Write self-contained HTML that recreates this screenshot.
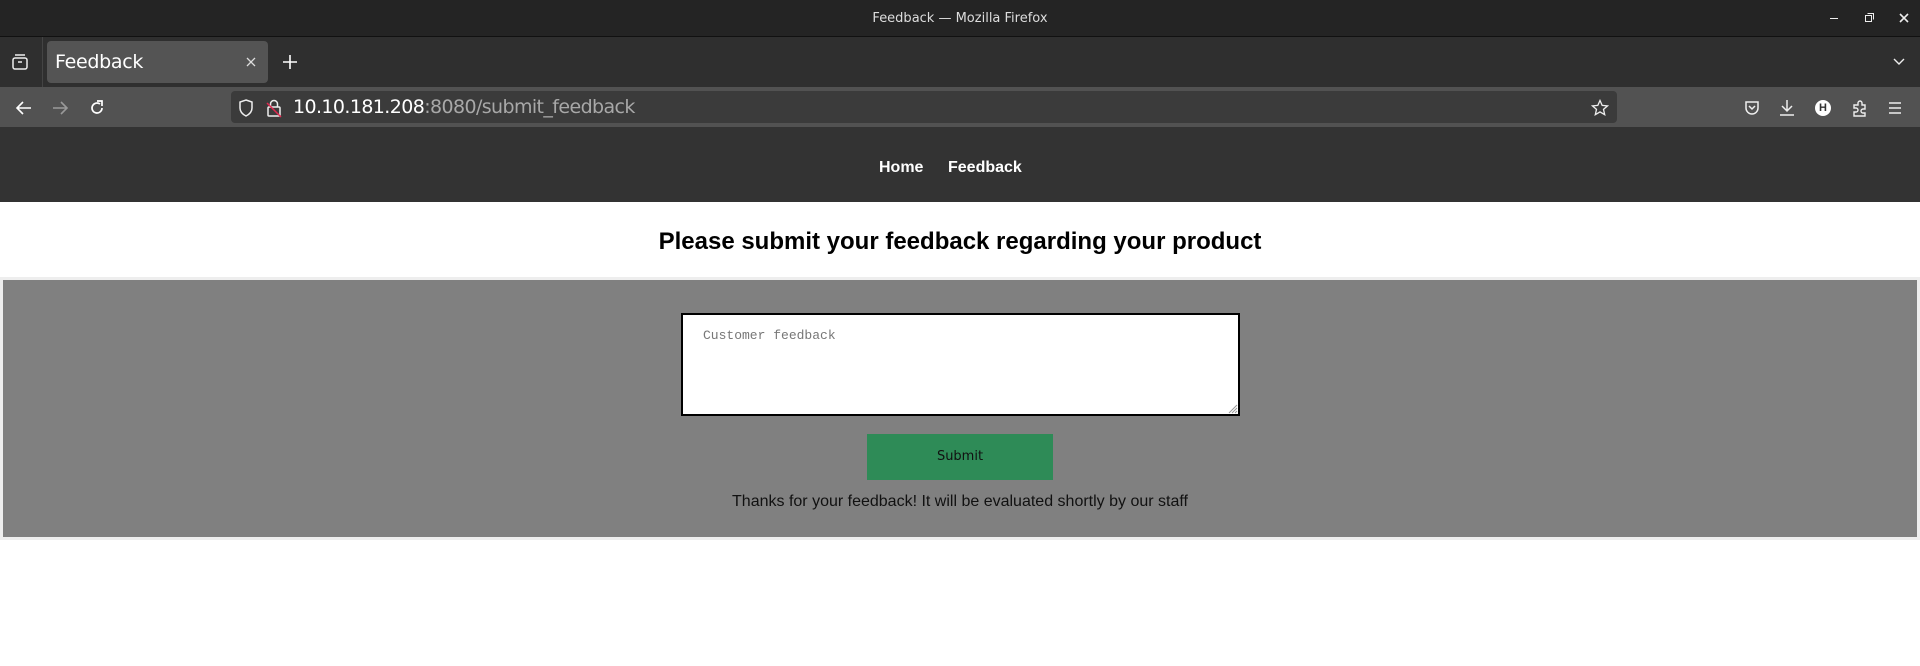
<!DOCTYPE html>
<html><head><meta charset="utf-8"><style>
*{margin:0;padding:0;box-sizing:border-box}
body{width:1920px;height:666px;background:#fff;font-family:"Liberation Sans",Arial,sans-serif;position:relative;overflow:hidden}
.abs{position:absolute}
#title{top:0;left:0;width:1920px;height:37px;background:#242424;border-bottom:1px solid #111}
#tabs{top:37px;left:0;width:1920px;height:50px;background:#2f2f2f}
#tool{top:87px;left:0;width:1920px;height:40px;background:#525252}
#nav{top:127px;left:0;width:1920px;height:75px;background:#333}
svg{position:absolute}
</style></head><body>
<div id="title" class="abs"><div class="abs" style="left:0;width:1920px;top:11px;text-align:center;color:#ddd;font-size:13px;font-family:'DejaVu Sans',sans-serif">Feedback — Mozilla Firefox</div>
<div class="abs" style="left:1830px;top:18px;width:8px;height:1px;background:#eee"></div>
<svg style="left:1864px;top:13px" width="10" height="10"><rect x="1.5" y="2.5" width="6" height="6" fill="none" stroke="#eee"/><path d="M3.5 0.5H9.5V6.5" fill="none" stroke="#eee"/></svg>
<svg style="left:1899px;top:13px" width="10" height="10"><path d="M1 1L9 9M9 1L1 9" stroke="#eee" stroke-width="1.6"/></svg>
</div>
<div id="tabs" class="abs">
<svg style="left:11px;top:16px" width="18" height="18"><rect x="2" y="5" width="14" height="11" rx="2" fill="none" stroke="#eee" stroke-width="1.5"/><path d="M4 2H14M7 9H11" stroke="#eee" stroke-width="1.5"/></svg>
<div class="abs" style="left:42px;top:0;width:1px;height:50px;background:#444"></div>
<div class="abs" style="left:47px;top:4px;width:221px;height:42px;background:#545454;border-radius:4px"></div>
<div class="abs" style="left:55px;top:14px;color:#fff;font-size:19px;font-family:'DejaVu Sans',sans-serif;letter-spacing:-0.3px">Feedback</div>
<svg style="left:246px;top:20px" width="10" height="10"><path d="M1 1L9 9M9 1L1 9" stroke="#ddd" stroke-width="1.3"/></svg>
<svg style="left:283px;top:18px" width="14" height="14"><path d="M7 0V14M0 7H14" stroke="#fff" stroke-width="1.6"/></svg>
<svg style="left:1893px;top:21px" width="12" height="8"><path d="M1 1L6 6L11 1" fill="none" stroke="#eee" stroke-width="1.4"/></svg>
</div>
<div id="tool" class="abs">
<svg style="left:15px;top:13px" width="18" height="16"><path d="M16 8H2M8 2L2 8L8 14" fill="none" stroke="#fff" stroke-width="1.6"/></svg>
<svg style="left:51px;top:13px" width="18" height="16"><path d="M2 8H16M10 2L16 8L10 14" fill="none" stroke="#999" stroke-width="1.6"/></svg>
<svg style="left:88px;top:12px" width="18" height="18"><path d="M14 9A5 5 0 1 1 12 5" fill="none" stroke="#fff" stroke-width="1.7"/><path d="M9 2H14V7" fill="none" stroke="#fff" stroke-width="1.7"/></svg>
<div class="abs" style="left:231px;top:4px;width:1386px;height:32px;background:#3b3b3b;border-radius:4px"></div>
<svg style="left:238px;top:12px" width="16" height="18"><path d="M8 1L14 3V9C14 13 11 15.5 8 17C5 15.5 2 13 2 9V3Z" fill="none" stroke="#eee" stroke-width="1.5"/></svg>
<svg style="left:266px;top:11px" width="16" height="20"><rect x="2" y="9" width="12" height="9" rx="1" fill="none" stroke="#eee" stroke-width="1.5"/><path d="M4.5 9V6A3.5 3.5 0 0 1 11.5 6V9" fill="none" stroke="#eee" stroke-width="1.5"/><path d="M1 5L15 19" stroke="#e22850" stroke-width="1.5"/></svg>
<div class="abs" style="left:293px;top:9px;font-size:19px;font-family:'DejaVu Sans',sans-serif;color:#fff;letter-spacing:-0.6px;white-space:nowrap">10.10.181.208<span style="color:#a8a8a8">:8080/submit_feedback</span></div>
<svg style="left:1591px;top:12px" width="18" height="18"><path d="M9 1.5L11.2 6.4L16.5 6.9L12.5 10.4L13.7 15.7L9 12.9L4.3 15.7L5.5 10.4L1.5 6.9L6.8 6.4Z" fill="none" stroke="#eee" stroke-width="1.3"/></svg>
<svg style="left:1744px;top:13px" width="16" height="16"><path d="M2 2H14V8A6 6 0 0 1 2 8Z" fill="none" stroke="#eee" stroke-width="1.5"/><path d="M5 6L8 9L11 6" fill="none" stroke="#eee" stroke-width="1.5"/></svg>
<svg style="left:1779px;top:12px" width="16" height="18"><path d="M8 1V12M3 7L8 12L13 7M1 16H15" fill="none" stroke="#eee" stroke-width="1.5"/></svg>
<div class="abs" style="left:1815px;top:13px;width:16px;height:16px;border-radius:50%;background:#fff;color:#333;font-size:11px;font-weight:bold;text-align:center;line-height:16px">H</div>
<svg style="left:1851px;top:12px" width="18" height="18"><path d="M3 6H7V4A2 2 0 0 1 11 4V6H14V10H12A2 2 0 0 0 12 14H14V17H3V13H5A2 2 0 0 0 5 9H3Z" fill="none" stroke="#eee" stroke-width="1.4"/></svg>
<svg style="left:1888px;top:14px" width="14" height="14"><path d="M1 2H13M1 7H13M1 12H13" stroke="#eee" stroke-width="1.5"/></svg>
</div>
<div id="nav" class="abs">
<div class="abs" style="left:879px;top:32px;color:#fff;font-weight:bold;font-size:16px">Home</div>
<div class="abs" style="left:948px;top:32px;color:#fff;font-weight:bold;font-size:16px">Feedback</div>
</div>
<div class="abs" style="left:0;top:228px;width:1920px;text-align:center;font-weight:bold;font-size:24px;color:#000">Please submit your feedback regarding your product</div>
<div class="abs" style="left:0;top:277px;width:1920px;height:263px;border:3px solid #eee;background:#808080"></div>
<div class="abs" style="left:681px;top:313px;width:559px;height:103px;border:2px solid #000;background:#fff"></div>
<div class="abs" style="left:703px;top:328px;font-family:'Liberation Mono',monospace;font-size:13px;color:#777">Customer feedback</div>
<svg style="left:1228px;top:404px" width="10" height="10"><path d="M9 1L1 9M9 4L4 9M9 7L7 9" stroke="#999" stroke-width="1"/></svg>
<div class="abs" style="left:867px;top:434px;width:186px;height:46px;background:#2e8b57;color:#111;font-size:13px;text-align:center;line-height:46px;font-family:'DejaVu Sans',sans-serif">Submit</div>
<div class="abs" style="left:0;top:493px;width:1920px;text-align:center;font-size:16px;color:#111">Thanks for your feedback! It will be evaluated shortly by our staff</div>
</body></html>
